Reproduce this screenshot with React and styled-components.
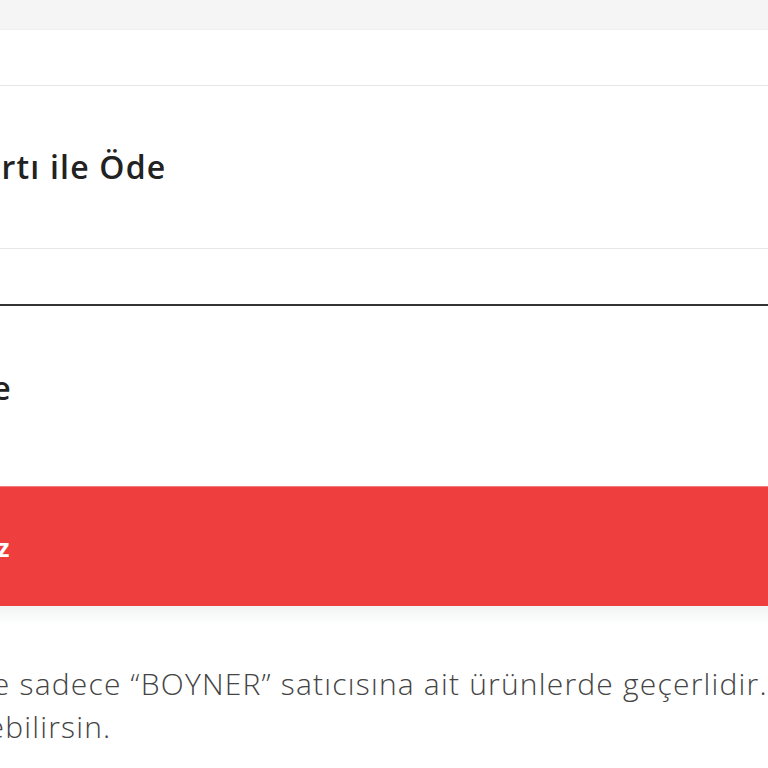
import React from 'react';
import styled, { createGlobalStyle } from 'styled-components';

const GlobalStyle = createGlobalStyle`
  html, body {
    margin: 0;
    padding: 0;
    background: #ffffff;
    overflow: hidden;
  }
  body {
    font-family: "Open Sans", Arial, sans-serif;
    color: #222;
  }
`;

const PaymentPage = () => {
  return (
    <>
      <GlobalStyle />
      <TopBand />
      <Panel>
        <EmptyRow />
        <OptionRow>
          <OptionTitle>Kredi Kartı ile Öde</OptionTitle>
        </OptionRow>
        <Spacer />
        <SelectedOption>
          <OptionTitle>Hızlı Öde</OptionTitle>
        </SelectedOption>
        <PayButton>Onaylayınız</PayButton>
        <ShadowStrip />
        <Note>
          Bu kart ile sadece “BOYNER” satıcısına ait ürünlerde geçerlidir.
          <br />
          Talep edebilirsin.
        </Note>
      </Panel>
    </>
  );
};

export default PaymentPage;

const TopBand = styled.div`
  height: 29px;
  background: #f6f5f6;
  border-bottom: 1px solid #f1f0f1;
`;

/* the card is wider than the window, its left part lies off screen */
const Panel = styled.div`
  margin-left: -137px;
  width: calc(100% + 300px);
`;

const EmptyRow = styled.div`
  height: 55px;
  border-bottom: 1px solid #e6e6e6;
`;

const OptionRow = styled.div`
  height: 163px;
  display: flex;
  align-items: center;
  padding-bottom: 2px;
  box-sizing: border-box;
  border-bottom: 1px solid #e6e6e6;
`;

const OptionTitle = styled.div`
  font-size: 32px;
  font-weight: 600;
  letter-spacing: 1.2px;
  color: #222;
`;

const Spacer = styled.div`
  height: 55px;
`;

const SelectedOption = styled.div`
  height: 181px;
  display: flex;
  align-items: center;
  padding-bottom: 16px;
  box-sizing: border-box;
  border-top: 2px solid #333;
`;

const PayButton = styled.button`
  display: flex;
  align-items: center;
  width: 100%;
  height: 120px;
  margin-top: 1px;
  padding: 0;
  border: none;
  border-top: 1px solid #f07a78;
  background: #ee3f3e;
  color: #ffffff;
  font-family: "Open Sans", Arial, sans-serif;
  font-size: 25px;
  font-weight: 700;
  cursor: pointer;
`;

const ShadowStrip = styled.div`
  height: 20px;
  background: linear-gradient(#f2f4f4, #ffffff);
`;

const Note = styled.p`
  margin: 36px 0 0;
  font-size: 30px;
  font-weight: 300;
  letter-spacing: 1.2px;
  line-height: 43px;
  color: #444;
`;
